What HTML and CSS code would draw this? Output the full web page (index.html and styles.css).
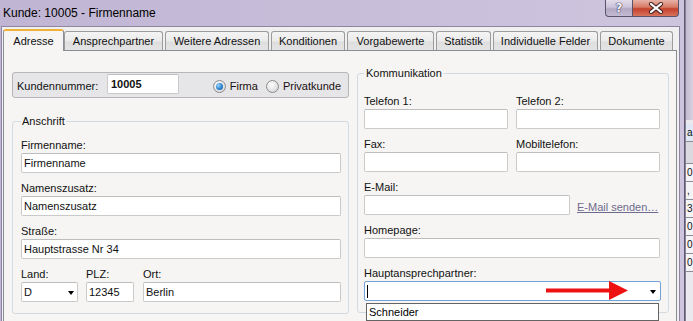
FILE: index.html
```html
<!DOCTYPE html>
<html lang="de">
<head>
<meta charset="utf-8">
<title>Kunde: 10005 - Firmenname</title>
<link rel="stylesheet" href="styles.css">
</head>
<body>
<div class="screen">
  <div class="window">
    <div class="titlebar">
      <span class="title">Kunde: 10005 - Firmenname</span>
      <div class="caption">
        <div class="cap cap-help"><span class="help-glyph">?</span></div>
        <div class="cap cap-close">
          <svg width="16" height="12" viewBox="0 0 16 12"><path d="M3 2 L13 10 M13 2 L3 10" stroke="#4a2a26" stroke-width="4.2" stroke-linecap="round"/><path d="M3 2 L13 10 M13 2 L3 10" stroke="#ffffff" stroke-width="2.2" stroke-linecap="round"/></svg>
        </div>
      </div>
    </div>
    <div class="client">
      <div class="tabs">
        <div class="tab active w-adr">Adresse</div>
        <div class="tab w-ans">Ansprechpartner</div>
        <div class="tab w-wei">Weitere Adressen</div>
        <div class="tab w-kon">Konditionen</div>
        <div class="tab w-vor">Vorgabewerte</div>
        <div class="tab w-sta">Statistik</div>
        <div class="tab w-ind">Individuelle Felder</div>
        <div class="tab w-dok">Dokumente</div>
      </div>
      <div class="panel">
        <div class="col-left">
          <div class="kdnr-box">
            <span class="kdnr-label">Kundennummer:</span>
            <div class="field kdnr-field">10005</div>
            <div class="radios">
              <span class="radio checked"></span><span class="radio-text first">Firma</span>
              <span class="radio"></span><span class="radio-text">Privatkunde</span>
            </div>
          </div>
          <fieldset class="group anschrift">
            <legend>Anschrift</legend>
            <div class="row">
              <label class="lbl">Firmenname:</label>
              <div class="field">Firmenname</div>
            </div>
            <div class="row">
              <label class="lbl">Namenszusatz:</label>
              <div class="field">Namenszusatz</div>
            </div>
            <div class="row">
              <label class="lbl">Straße:</label>
              <div class="field">Hauptstrasse Nr 34</div>
            </div>
            <div class="row last addr-line">
              <div class="cell cell-land">
                <label class="lbl">Land:</label>
                <div class="field select">D<span class="drop"></span></div>
              </div>
              <div class="cell cell-plz">
                <label class="lbl">PLZ:</label>
                <div class="field">12345</div>
              </div>
              <div class="cell cell-ort">
                <label class="lbl">Ort:</label>
                <div class="field">Berlin</div>
              </div>
            </div>
          </fieldset>
        </div>
        <fieldset class="group komm">
          <legend>Kommunikation</legend>
          <div class="komm-grid">
            <div class="row">
              <label class="lbl">Telefon 1:</label>
              <div class="field"></div>
            </div>
            <div class="row">
              <label class="lbl">Telefon 2:</label>
              <div class="field"></div>
            </div>
            <div class="row">
              <label class="lbl">Fax:</label>
              <div class="field"></div>
            </div>
            <div class="row">
              <label class="lbl">Mobiltelefon:</label>
              <div class="field"></div>
            </div>
            <div class="row span2">
              <label class="lbl">E-Mail:</label>
              <div class="email-line">
                <div class="field email-field"></div>
                <a class="mail-link">E-Mail senden…</a>
              </div>
            </div>
            <div class="row span2">
              <label class="lbl">Homepage:</label>
              <div class="field"></div>
            </div>
            <div class="row span2 last">
              <label class="lbl">Hauptansprechpartner:</label>
              <div class="combo">
                <span class="caret"></span>
                <span class="drop combo-drop"></span>
                <svg class="red-arrow" width="85" height="22" viewBox="0 0 85 22"><rect x="1" y="8.5" width="65" height="4" fill="#ee1111"/><path d="M64 1 L83 10.5 L64 20 Z" fill="#ee1111"/></svg>
                <div class="droplist">Schneider</div>
              </div>
            </div>
          </div>
        </fieldset>
      </div>
    </div>
  </div>
  <div class="behind">
    <div class="behind-top"></div>
    <div class="behind-grid">
      <div class="bg-cell hl">a</div>
      <div class="bg-cell gap"></div>
      <div class="bg-cell">0</div>
      <div class="bg-cell">,</div>
      <div class="bg-cell">3</div>
      <div class="bg-cell">0</div>
      <div class="bg-cell">0</div>
      <div class="bg-cell">0</div>
    </div>
  </div>
</div>
</body>
</html>
```
FILE: styles.css
```css
* { box-sizing: border-box; }
html, body { margin: 0; padding: 0; }
body {
  width: 693px;
  height: 321px;
  overflow: hidden;
  font-family: "Liberation Sans", Arial, sans-serif;
  font-size: 11px;
  color: #111;
  background: #ffffff;
}
.screen { display: flex; height: 321px; }

/* window frame */
.window {
  width: 685px;
  flex: none;
  display: flex;
  flex-direction: column;
  background: linear-gradient(90deg, #c0b5d3, #c9bfdb 60%, #cdc4de);
  padding: 0 4px 0 1px;
  border-right: 1px solid #5f5970;
}
.titlebar {
  height: 26px;
  flex: none;
  display: flex;
  justify-content: space-between;
  align-items: flex-start;
}
.title {
  font-size: 12px;
  line-height: 26px;
  padding-left: 2px;
  color: #000;
}
.caption { display: flex; margin-right: 1px; }
.cap {
  height: 17px;
  border: 1px solid #5a546a;
  border-top: none;
  display: flex;
  align-items: center;
  justify-content: center;
}
.cap-help {
  width: 27px;
  border-right: none;
  border-radius: 0 0 0 4px;
  background: linear-gradient(#e2dcea, #cbc3da 45%, #b2a8c5 55%, #c3bbd3);
}
.help-glyph {
  font-family: "DejaVu Sans", sans-serif;
  font-weight: bold;
  font-size: 12px;
  line-height: 14px;
  color: #f4f2f8;
  text-shadow: 0 0 1px #3c3650, 0 0 1px #3c3650, 0 0 1px #3c3650;
}
.cap-close {
  width: 47px;
  border-radius: 0 0 4px 0;
  background: linear-gradient(#e8b2a6, #d77a66 45%, #c5412c 55%, #d8735c);
}

/* client area */
.client {
  flex: 1;
  display: flex;
  flex-direction: column;
  background: #f0f0f0;
  border: 1px solid #8e86a0;
  border-bottom: none;
  padding: 2px 2px 0 1px;
}
.tabs {
  display: flex;
  align-items: flex-end;
  height: 22px;
  flex: none;
  position: relative;
  z-index: 1;
}
.tab {
  height: 19px;
  margin-bottom: 1px;
  margin-right: 2px;
  border: 1px solid #9c9c9c;
  border-bottom: none;
  border-radius: 3px 3px 0 0;
  background: linear-gradient(#f4f4f4, #ebebeb 50%, #dedede 55%, #e4e4e4);
  text-align: center;
  line-height: 18px;
  color: #111;
  white-space: nowrap;
}
.tab.active {
  height: 22px;
  margin-bottom: 0;
  margin-right: 0;
  border-color: #8b8e96;
  border-top: 2px solid #f2b23a;
  background: #f6f5f3;
  line-height: 20px;
}
.w-adr { width: 61px; }
.w-ans { width: 99px; }
.w-wei { width: 104px; }
.w-kon { width: 74px; }
.w-vor { width: 87px; }
.w-sta { width: 55px; }
.w-ind { width: 105px; }
.w-dok { width: 73px; }

.panel {
  flex: 1;
  margin-top: -1px;
  background: #f6f5f3;
  border: 1px solid #898c94;
  border-bottom: none;
  display: flex;
  align-items: flex-start;
  gap: 8px;
  padding: 15px 0 0 8px;
}
.col-left { width: 337px; flex: none; padding-top: 6px; }

.kdnr-box {
  height: 26px;
  border: 1px solid #b5b5ba;
  border-radius: 3px;
  background: #e6e6e9;
  display: flex;
  align-items: center;
  padding: 0 7px 2px 4px;
}
.kdnr-label { width: 90px; flex: none; padding-top: 4px; }
.field {
  height: 20px;
  background: #fff;
  border: 1px solid #cacaca;
  border-top-color: #bdbdbd;
  border-radius: 2px;
  padding: 0 2px;
  line-height: 18px;
  white-space: nowrap;
  overflow: hidden;
}
.kdnr-field { width: 72px; font-weight: bold; padding-left: 3px; }
.radios { margin-left: auto; display: flex; align-items: center; padding-top: 4px; }
.radio {
  width: 13px;
  height: 13px;
  border-radius: 50%;
  border: 1px solid #8d8d8d;
  background: radial-gradient(circle at 40% 35%, #ffffff, #dcdcdc 70%, #c6c6c6);
  display: flex;
  align-items: center;
  justify-content: center;
  margin-right: 4px;
}
.radio.checked::after {
  content: "";
  width: 7px;
  height: 7px;
  border-radius: 50%;
  background: radial-gradient(circle at 35% 35%, #9fd4ff, #2a83cf 55%, #0f4f95);
}
.radio-text { color: #1a0f0f; }
.radio-text.first { margin-right: 8px; }

/* group boxes */
.group {
  margin: 0;
  border: 1px solid #d3dbe2;
  border-radius: 3px;
  min-width: 0;
}
.group legend { padding: 0 1px; line-height: 14px; color: #111; }
.anschrift { margin-top: 16px; padding: 10px 7px 11px 8px; }
.komm { width: 312px; flex: none; padding: 14px 8px 11px 6px; }
.komm legend { padding: 0 2px; }

.row { margin-bottom: 8px; }
.row.last { margin-bottom: 0; }
.lbl { display: block; line-height: 14px; margin-bottom: 1px; }

.addr-line { display: flex; gap: 8px; }
.cell-land { width: 57px; }
.cell-plz { width: 48px; }
.cell-ort { flex: 1; margin-left: 1px; }
.select { position: relative; }
.drop {
  position: absolute;
  width: 0;
  height: 0;
  border-left: 3.5px solid transparent;
  border-right: 3.5px solid transparent;
  border-top: 4px solid #000;
}
.select .drop { left: 46px; top: 8px; }

.komm-grid { display: grid; grid-template-columns: 144px 144px; column-gap: 8px; }
.span2 { grid-column: 1 / 3; }
.email-line { display: flex; align-items: center; }
.email-field { width: 206px; }
.mail-link {
  margin-left: 7px;
  color: #6e6b8c;
  text-decoration: underline;
  padding-top: 3px;
  white-space: nowrap;
}

.combo {
  position: relative;
  height: 20px;
  width: 297px;
  background: #fff;
  border: 1px solid #6fa3d9;
  border-radius: 2px;
}
.caret {
  position: absolute;
  left: 2px;
  top: 3px;
  width: 1px;
  height: 13px;
  background: #000;
}
.combo-drop { left: 285px; top: 8px; }
.red-arrow { position: absolute; left: 180px; top: -2px; }
.droplist {
  position: absolute;
  left: 1px;
  top: 21px;
  width: 293px;
  height: 18px;
  background: #fff;
  border: 1px solid #646464;
  padding-left: 2px;
  line-height: 16px;
  color: #000;
  z-index: 2;
}

/* window behind */
.behind {
  flex: 1;
  display: flex;
  flex-direction: column;
  overflow: hidden;
  border-left: 1px solid #8a8298;
  background: #cfc8da;
}
.behind-top { height: 120px; flex: none; background: linear-gradient(90deg, #c3bbd0, #d8d2e0); }
.behind-grid { flex: 1; background: #e9e9ee; padding-top: 4px; }
.bg-cell {
  height: 18px;
  line-height: 17px;
  border-bottom: 1px solid #8b8b95;
  padding-left: 1px;
  font-size: 10px;
  color: #111;
  background: #f4f4f6;
  white-space: nowrap;
}
.bg-cell.hl { color: #111; background: #dfe8f4; }
.bg-cell.gap { height: 22px; background: #d9d9df; }
```
